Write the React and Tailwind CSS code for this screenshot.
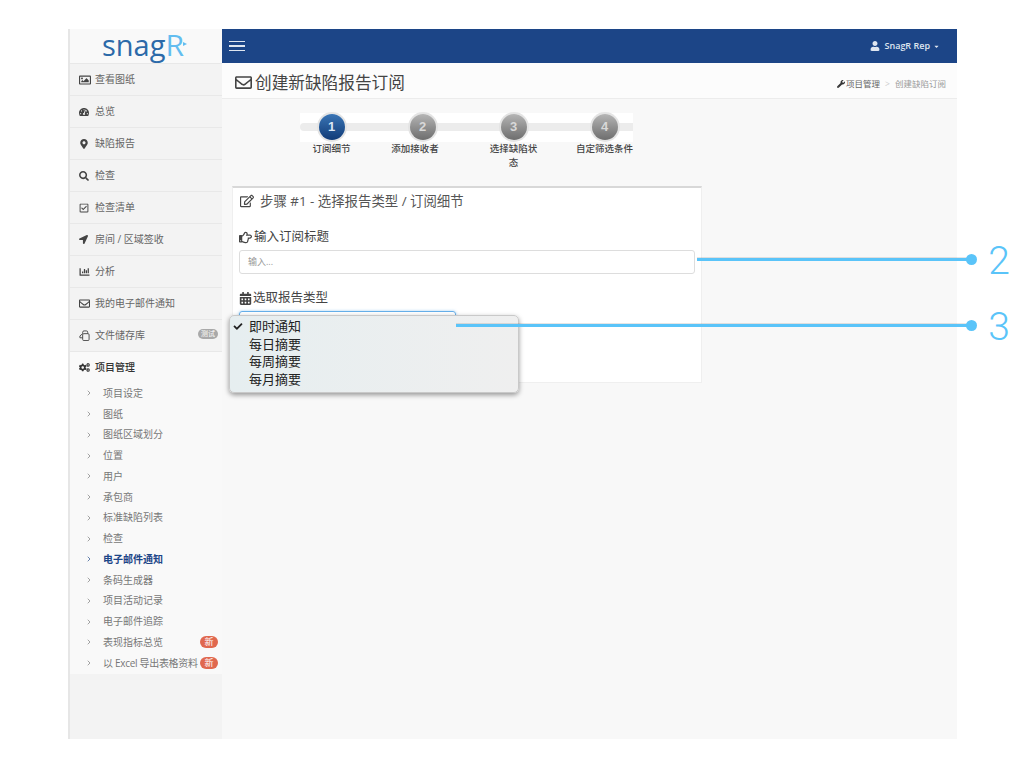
import React from "react";
import { ChevronRight } from "lucide-react";
import {
  FaRegImage,
  FaTachometerAlt,
  FaMapMarkerAlt,
  FaSearch,
  FaRegCheckSquare,
  FaLocationArrow,
  FaChartBar,
  FaRegEnvelope,
  FaCogs,
  FaRegEdit,
  FaRegHandPointRight,
  FaCalendarAlt,
  FaWrench,
  FaUser,
  FaCaretDown,
  FaCheck,
} from "react-icons/fa";

const fontStack = "font-['Open_Sans','Noto_Sans_CJK_SC',sans-serif]";

const FilesIcon = () => (
  <svg viewBox="0 0 12 12" className="w-[11px] h-[11px]" fill="none" stroke="currentColor" strokeWidth="1">
    <path d="M4 4 V2.5 Q4 1 5.5 1 H8 Q9.5 1 9.5 2.5 V4" />
    <path d="M4 4 L1 6.5 V8.5 H4" />
    <rect x="4" y="4" width="7" height="7.5" rx="1.2" />
  </svg>
);

const mainNav = [
  { label: "查看图纸", icon: <FaRegImage className="w-[12px] h-[12px]" /> },
  { label: "总览", icon: <FaTachometerAlt className="w-[10px] h-[10px]" /> },
  { label: "缺陷报告", icon: <FaMapMarkerAlt className="w-[8px] h-[10px] ml-[1px]" /> },
  { label: "检查", icon: <FaSearch className="w-[10px] h-[10px]" /> },
  { label: "检查清单", icon: <FaRegCheckSquare className="w-[10px] h-[10px]" /> },
  { label: "房间 / 区域签收", icon: <FaLocationArrow className="w-[9px] h-[9px]" /> },
  { label: "分析", icon: <FaChartBar className="w-[11px] h-[10px]" /> },
  { label: "我的电子邮件通知", icon: <FaRegEnvelope className="w-[11px] h-[11px]" /> },
  { label: "文件储存库", icon: <FilesIcon />, beta: true },
];

const subNav = [
  { label: "项目设定" },
  { label: "图纸" },
  { label: "图纸区域划分" },
  { label: "位置" },
  { label: "用户" },
  { label: "承包商" },
  { label: "标准缺陷列表" },
  { label: "检查" },
  { label: "电子邮件通知", active: true },
  { label: "条码生成器" },
  { label: "项目活动记录" },
  { label: "电子邮件追踪" },
  { label: "表现指标总览", isNew: true },
  { label: "以 Excel 导出表格资料", isNew: true, tight: true },
];

const steps = [
  { n: 1, label: "订阅细节" },
  { n: 2, label: "添加接收者", shift: true },
  { n: 3, label: <>选择缺陷状<br />态</> },
  { n: 4, label: "自定筛选条件" },
];

const Sidebar = () => (
  <aside className="w-[154px] shrink-0 flex flex-col bg-[#f3f3f3] border-l-2 border-[#e6e6e6]">
    <div className="h-[34px] shrink-0 bg-[#f9f9f9] flex items-center justify-center pr-[6px]">
      <span className="relative text-[29px] leading-none font-medium text-[#2c6aa9] font-['Open_Sans',sans-serif] -mt-[3px]">
        snag<span className="text-[#62bdf0] text-[30px] font-normal">R</span>
        <svg viewBox="0 0 4 4" className="absolute right-[-3px] top-[12px] w-[4px] h-[4px] fill-[#62bdf0]">
          <path d="M0 0 L4 2 L0 4 Z" />
        </svg>
      </span>
    </div>
    {mainNav.map((item) => (
      <div
        key={item.label}
        className="h-[32px] shrink-0 flex items-center pl-[9px] pr-[4px] border-t border-[#e8e8e8] text-[10px] text-[#666]"
      >
        <span className="w-[16px] flex text-[#444]">{item.icon}</span>
        <span className="flex-1">{item.label}</span>
        {item.beta && (
          <span className="bg-[#a9a9a9] text-white text-[7px] leading-[10px] px-[3px] rounded-full -mt-[4px]">测试</span>
        )}
      </div>
    ))}
    <div className="h-[32px] shrink-0 flex items-center pl-[9px] border-t border-[#e8e8e8] bg-[#f9f9f9] text-[10px] font-medium text-[#333]">
      <span className="w-[16px] flex text-[11px]"><FaCogs /></span>
      项目管理
    </div>
    <div className="bg-[#f9f9f9]">
      {subNav.map((item) => (
        <div
          key={item.label}
          className={`h-[20.75px] flex items-center pl-[15px] pr-[4px] text-[10px] ${item.active ? "font-bold text-[#1c4587]" : "text-[#777]"}`}
        >
          <ChevronRight className="w-[8px] h-[8px] mr-[10px] shrink-0" strokeWidth={2} />
          <span className={`flex-1 whitespace-nowrap ${item.tight ? "tracking-[-0.3px]" : ""}`}>{item.label}</span>
          {item.isNew && (
            <span className="bg-[#e0684f] text-white text-[9px] leading-[12px] px-[4.5px] rounded-full shrink-0">新</span>
          )}
        </div>
      ))}
    </div>
  </aside>
);

const Stepper = () => (
  <div className="w-[333px] ml-[78px] mt-[14px]">
    <div className="relative h-[29px] bg-white">
      <div className="absolute left-0 right-0 top-[10px] h-[8px] bg-[#ececec] rounded-l-full" />
    </div>
    <div className="flex -mt-[29px] relative">
      {steps.map((step) => (
        <div key={step.n} className="w-[91px] shrink-0 flex flex-col items-center first:ml-[-14px]">
          <div
            className={`mt-[1px] w-[26px] h-[26px] rounded-full ring-2 ring-[#e4e4e4] flex items-center justify-center text-[13px] font-bold font-['Liberation_Sans',sans-serif] ${step.n === 1 ? "bg-gradient-to-b from-[#3a75b5] to-[#123c78] text-[#dbe7f4]" : "bg-gradient-to-b from-[#b5b5b5] to-[#6e6e6e] text-[#d8d8d8]"}`}
          >
            {step.n}
          </div>
          <div className={`mt-[2px] text-[9.5px] leading-[14px] font-medium text-[#444] text-center whitespace-nowrap ${step.shift ? "-ml-[15px]" : ""}`}>
            {step.label}
          </div>
        </div>
      ))}
    </div>
  </div>
);

const FormPanel = () => (
  <section className="mt-[16px] ml-[10px] w-[470px] h-[197px] bg-white border-t-2 border-[#d8d8d8] border-x border-b border-x-[#efefef] border-b-[#efefef] px-[6px]">
    <h2 className="flex items-center h-[26px] text-[13.4px] text-[#555]">
      <FaRegEdit className="w-[14px] h-[14px] mr-[6px] ml-[1px] text-[#444]" />
      步骤 #1 - 选择报告类型 / 订阅细节
    </h2>
    <label className="flex items-center mt-[14px] h-[18px] text-[12.5px] text-[#444]">
      <FaRegHandPointRight className="w-[13px] h-[13px] mr-[2px]" />
      输入订阅标题
    </label>
    <div className="mt-[4px] h-[24px] rounded-[3px] border border-[#ddd] flex items-center px-[8px] text-[9px] text-[#999]">
      输入...
    </div>
    <label className="flex items-center mt-[15px] h-[18px] text-[12.5px] text-[#444]">
      <FaCalendarAlt className="w-[13px] h-[13px] mr-[1px]" />
      选取报告类型
    </label>
    <div className="mt-[4px] h-[24px] w-[217px] rounded-[3px] border border-[#66afe9] shadow-[0_0_3px_rgba(102,175,233,0.6)]" />
  </section>
);

const DropdownMenu = () => (
  <div className="absolute left-[229px] top-[315px] w-[290px] h-[78px] rounded-[5px] border border-[#c9c9c9] bg-gradient-to-r from-[#e6eef0] to-[#efefef] shadow-[0_2px_5px_rgba(0,0,0,0.4)] pt-[2px] text-[13px] leading-[17.5px] text-[#222]">
    {["即时通知", "每日摘要", "每周摘要", "每月摘要"].map((option, i) => (
      <div key={option} className="flex items-center pl-[3px]">
        <span className="w-[16px] flex">{i === 0 && <FaCheck className="w-[10px] h-[9px]" />}</span>
        {option}
      </div>
    ))}
  </div>
);

const Callout = ({ top, left, width, n }) => (
  <>
    <div
      className="absolute h-[3px] bg-[#5ac4f9] shadow-[0_-1px_0_rgba(0,0,0,0.1)]"
      style={{ top, left, width }}
    />
    <div className="absolute w-[11px] h-[11px] rounded-full bg-[#5ac4f9] left-[966px]" style={{ top: top - 4 }} />
    <div
      className="absolute left-[987px] w-[24px] text-center text-[39px] leading-[40px] font-light text-[#5ac4f9] font-['Roboto',sans-serif]"
      style={{ top: top - 17 }}
    >
      {n}
    </div>
  </>
);

export default function App() {
  return (
    <div className={`relative w-[1024px] h-[768px] overflow-hidden bg-white pt-[29px] pl-[68px] ${fontStack}`}>
      <div className="w-[889px] h-[710px] flex">
        <Sidebar />
        <main className="flex-1 flex flex-col bg-[#f8f8f8] min-w-0">
          <header className="h-[34px] shrink-0 bg-[#1c4587] flex items-center justify-between pl-[7px] pr-[17px] text-white">
            <div className="flex flex-col gap-[3px] w-[16px]">
              <span className="h-[1.5px] bg-[#dfe6f0]" />
              <span className="h-[1.5px] bg-[#dfe6f0]" />
              <span className="h-[1.5px] bg-[#dfe6f0]" />
            </div>
            <div className="flex items-center text-[9px] text-[#dfe6f0]">
              <FaUser className="w-[10px] h-[10px] mr-[5px]" />
              <span className="font-semibold">SnagR Rep</span>
              <FaCaretDown className="w-[7px] h-[7px] ml-[3px]" />
            </div>
          </header>
          <div className="h-[36px] shrink-0 bg-[#fcfcfc] border-b border-[#ececec] flex items-center justify-between pl-[13px] pr-[11px]">
            <h1 className="flex items-center text-[16.67px] text-[#444] mt-[3px]">
              <FaRegEnvelope className="w-[17px] h-[17px] mr-[3px]" />
              创建新缺陷报告订阅
            </h1>
            <div className="flex items-center text-[8.5px] text-[#999] mt-[7px]">
              <FaWrench className="w-[8px] h-[8px] mr-[1px] text-[#333]" />
              <span className="text-[#666]">项目管理</span>
              <span className="mx-[5px] text-[#ccc]">&gt;</span>
              创建缺陷订阅
            </div>
          </div>
          <Stepper />
          <FormPanel />
        </main>
      </div>
      <DropdownMenu />
      <Callout top={258} left={697} width={272} n={2} />
      <Callout top={324} left={456} width={513} n={3} />
    </div>
  );
}
